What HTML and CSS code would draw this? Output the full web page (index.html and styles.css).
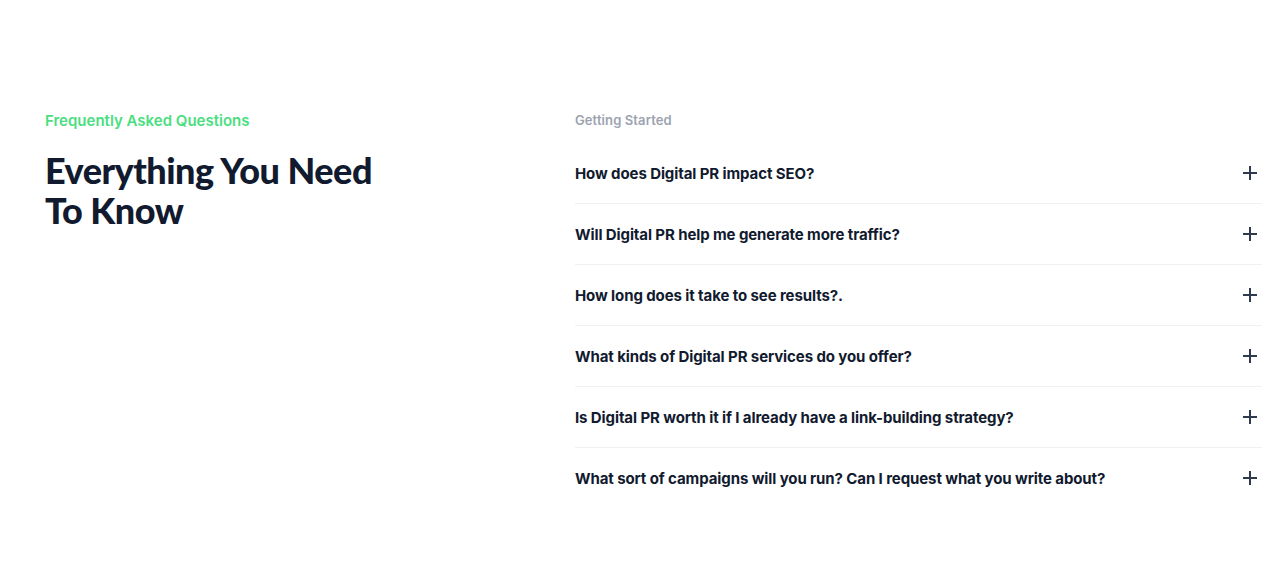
FILE: index.html
```html
<!DOCTYPE html>
<html lang="en">
<head>
<meta charset="utf-8">
<title>FAQ</title>
<link rel="stylesheet" href="styles.css">
</head>
<body>
<section class="faq">
  <div class="faq-intro">
    <p class="eyebrow">Frequently Asked Questions</p>
    <h2 class="title">Everything You Need<br>To Know</h2>
  </div>
  <div class="faq-list">
    <p class="group-label">Getting Started</p>
    <div class="item"><span class="q">How does Digital PR impact SEO?</span><svg class="plus" viewBox="0 0 14 14"><path d="M7 0v14M0 7h14"/></svg></div>
    <div class="item"><span class="q">Will Digital PR help me generate more traffic?</span><svg class="plus" viewBox="0 0 14 14"><path d="M7 0v14M0 7h14"/></svg></div>
    <div class="item"><span class="q">How long does it take to see results?.</span><svg class="plus" viewBox="0 0 14 14"><path d="M7 0v14M0 7h14"/></svg></div>
    <div class="item"><span class="q">What kinds of Digital PR services do you offer?</span><svg class="plus" viewBox="0 0 14 14"><path d="M7 0v14M0 7h14"/></svg></div>
    <div class="item"><span class="q">Is Digital PR worth it if I already have a link-building strategy?</span><svg class="plus" viewBox="0 0 14 14"><path d="M7 0v14M0 7h14"/></svg></div>
    <div class="item"><span class="q">What sort of campaigns will you run? Can I request what you write about?</span><svg class="plus" viewBox="0 0 14 14"><path d="M7 0v14M0 7h14"/></svg></div>
  </div>
</section>
</body>
</html>
```
FILE: styles.css
```css
html, body {
  margin: 0;
  padding: 0;
  background: #ffffff;
}
body {
  font-family: Inter, "Noto Sans", sans-serif;
  color: #111a2e;
}
.faq {
  display: grid;
  grid-template-columns: 530px 1fr;
  padding: 110px 3px 0 45px;
}
.eyebrow {
  margin: 0;
  font-size: 15px;
  line-height: 21px;
  font-weight: 600;
  color: #4ade80;
}
.title {
  margin: 19px 0 0;
  font-family: Lato, "Noto Sans", sans-serif;
  font-size: 36px;
  line-height: 40px;
  font-weight: 900;
  letter-spacing: -0.5px;
  color: #111a2e;
}
.group-label {
  margin: 0 0 13px;
  font-size: 13px;
  line-height: 20px;
  font-weight: 600;
  letter-spacing: 0.1px;
  color: #9ca3af;
}
.item {
  display: flex;
  align-items: center;
  justify-content: space-between;
  padding: 21px 5px 19px 0;
  line-height: 20px;
  border-bottom: 1px solid #f0f1f3;
}
.item:last-child {
  border-bottom: none;
}
.q {
  font-size: 15px;
  font-weight: 700;
  letter-spacing: -0.1px;
  color: #111a2e;
}
.plus {
  width: 14px;
  height: 14px;
  flex: none;
  margin-top: -3px;
}
.plus path {
  stroke: #2f3a4c;
  stroke-width: 2;
  fill: none;
}
```
